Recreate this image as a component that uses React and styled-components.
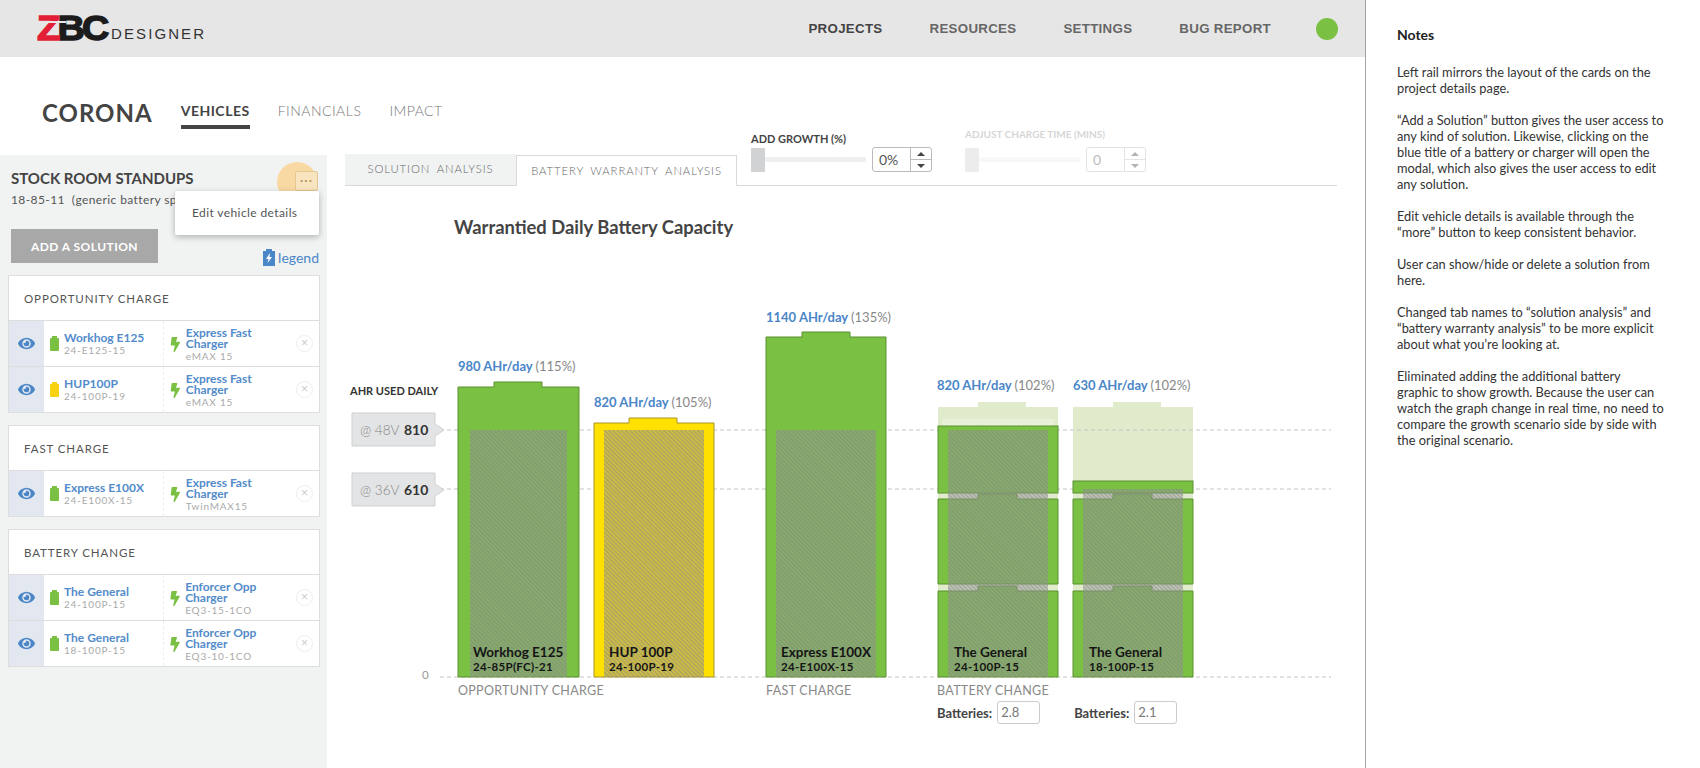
import React from "react";
import styled, { createGlobalStyle } from "styled-components";
import { FaEye, FaBolt } from "react-icons/fa";

const GlobalStyle = createGlobalStyle`
  html, body { margin: 0; padding: 0; background: #fff; }
  body { font-family: Lato, "Open Sans", sans-serif; color: #444; }
`;

const Page = styled.div`
  display: flex;
  width: 1700px;
  height: 768px;
  overflow: hidden;
`;

const Main = styled.div`
  width: 1365px;
  border-right: 1px solid #a5a5a5;
  display: flex;
  flex-direction: column;
`;

const Header = styled.header`
  height: 57px;
  flex: none;
  background: #e6e6e6;
  display: flex;
  align-items: center;
  padding: 0 27px 0 37px;
`;

const Logo = styled.div`
  display: flex;
  align-items: flex-end;
  margin-right: auto;
  margin-top: -2px;
`;

const LogoMark = styled.span`
  font-family: "Liberation Sans", Arial, sans-serif;
  font-weight: 700;
  font-size: 35px;
  line-height: 27px;
  letter-spacing: -2.5px;
  color: #1c1c1c;
  -webkit-text-stroke: 1.4px currentColor;
  display: inline-block;
  width: 70px;
  white-space: nowrap;
  transform: scaleX(1.08);
  transform-origin: left;
`;

const LogoZ = styled.span`
  position: relative;
  color: #e21f36;
  &::after {
    content: "";
    position: absolute;
    left: 5px;
    top: 13px;
    width: 22px;
    height: 2px;
    background: #e6e6e6;
  }
`;

const LogoWord = styled.span`
  font-family: "Liberation Sans", Arial, sans-serif;
  font-size: 15px;
  line-height: 14px;
  letter-spacing: 2.1px;
  color: #333;
  margin-left: 4px;
`;

const TopNav = styled.nav`
  display: flex;
  align-items: center;
  gap: 47px;
`;

const TopLink = styled.a`
  font-family: "Liberation Sans", Arial, sans-serif;
  font-weight: 700;
  font-size: 13.3px;
  letter-spacing: 0.3px;
  color: ${(p) => (p.$active ? "#444" : "#666")};
`;

const StatusDot = styled.span`
  width: 22px;
  height: 22px;
  border-radius: 50%;
  background: #7ac143;
  margin-left: -2px;
`;

const ProjectBar = styled.div`
  height: 98px;
  flex: none;
  display: flex;
  align-items: flex-start;
  padding: 40px 0 0 42px;
  box-sizing: border-box;
`;

const ProjectName = styled.h1`
  margin: 0 28px 0 0;
  font-size: 24px;
  line-height: 32px;
  font-weight: 700;
  letter-spacing: 1px;
  color: #444;
`;

const ProjectTabs = styled.div`
  display: flex;
  gap: 28px;
  padding-top: 3px;
`;

const ProjectTab = styled.a`
  font-size: 14px;
  line-height: 22px;
  letter-spacing: 0.5px;
  height: 29px;
  box-sizing: border-box;
  font-weight: ${(p) => (p.$active ? 700 : 300)};
  color: ${(p) => (p.$active ? "#444" : "#777")};
  border-bottom: ${(p) => (p.$active ? "4px solid #444" : "none")};
`;

const Body = styled.div`
  flex: 1;
  display: flex;
  min-height: 0;
`;

const Rail = styled.aside`
  width: 327px;
  flex: none;
  background: #f1f3f3;
  box-sizing: border-box;
  padding: 15px 7px 0 8px;
`;

const VehicleHead = styled.div`
  position: relative;
  padding-left: 3px;
`;

const VehicleTitle = styled.h2`
  margin: 0;
  font-size: 15px;
  line-height: 17px;
  font-weight: 700;
  color: #444;
`;

const VehicleSub = styled.div`
  margin-top: 5px;
  font-size: 12px;
  line-height: 16px;
  letter-spacing: 0.4px;
  color: #555;
  white-space: pre;
`;

const Highlight = styled.span`
  position: absolute;
  left: 269px;
  top: -8px;
  width: 40px;
  height: 40px;
  border-radius: 50%;
  background: #f8d9a3;
`;

const MoreButton = styled.button`
  position: absolute;
  left: 287px;
  top: 1px;
  width: 23px;
  height: 20px;
  padding: 0 0 6px;
  border: 1px solid #e3c790;
  border-radius: 2px;
  background: #f8e4bf;
  color: #b8935a;
  font-size: 12px;
  font-weight: 700;
  line-height: 12px;
  letter-spacing: 1px;
`;

const Popover = styled.div`
  position: absolute;
  left: 167px;
  top: 21px;
  width: 144px;
  height: 44px;
  background: #fff;
  border-radius: 2px;
  box-shadow: 0 2px 6px rgba(0, 0, 0, 0.28);
  font-size: 12px;
  line-height: 44px;
  letter-spacing: 0.4px;
  color: #555;
  padding-left: 17px;
  box-sizing: border-box;
  white-space: nowrap;
`;

const ActionRow = styled.div`
  display: flex;
  align-items: flex-end;
  justify-content: space-between;
  margin: 21px 1px 12px 3px;
`;

const AddButton = styled.button`
  width: 147px;
  height: 34px;
  border: 0;
  background: #a8a8a8;
  color: #fff;
  font-family: inherit;
  font-weight: 700;
  font-size: 12px;
  letter-spacing: 0.45px;
`;

const Legend = styled.a`
  display: flex;
  align-items: center;
  gap: 3px;
  font-size: 14px;
  line-height: 14px;
  color: #4a86c8;
  margin-bottom: -3px;
`;

const Card = styled.section`
  background: #fff;
  border: 1px solid #ddd;
  margin-bottom: 12px;
`;

const CardHeader = styled.div`
  height: 44px;
  display: flex;
  align-items: center;
  padding-left: 15px;
  font-size: 11.5px;
  letter-spacing: 0.9px;
  color: #555;
`;

const SolutionRow = styled.div`
  height: 45px;
  display: flex;
  border-top: 1px solid #ddd;
`;

const EyeCell = styled.div`
  width: 35px;
  flex: none;
  background: #e3e8f0;
  display: flex;
  align-items: center;
  justify-content: center;
  color: #4a86c8;
  font-size: 17px;
`;

const BatteryCell = styled.div`
  width: 120px;
  flex: none;
  box-sizing: border-box;
  display: flex;
  align-items: center;
  gap: 5px;
  padding-left: 6px;
  border-right: 1px dashed #eee;
`;

const ChargerCell = styled.div`
  width: 131px;
  flex: none;
  box-sizing: border-box;
  display: flex;
  align-items: center;
  gap: 3px;
  padding: 1px 0 0 4px;
  color: #7ac143;
  font-size: 15px;
`;

const BatteryIcon = styled.span`
  position: relative;
  width: 9px;
  height: 13px;
  margin-top: 2px;
  background: ${(p) => p.$color};
  border-radius: 1px;
  flex: none;
  &::before {
    content: "";
    position: absolute;
    left: 2px;
    top: -2px;
    width: 5px;
    height: 2px;
    background: ${(p) => p.$color};
  }
`;

const ItemText = styled.div`
  min-width: 0;
`;

const ItemName = styled.div`
  font-size: 12px;
  line-height: 11px;
  font-weight: 700;
  color: #4a86c8;
  opacity: 0.95;
`;

const ItemPart = styled.div`
  font-size: 10px;
  line-height: 12px;
  margin-top: 1px;
  letter-spacing: 0.8px;
  color: #aaa;
`;

const RemoveIcon = styled.span`
  width: 15px;
  height: 15px;
  margin: auto 0 auto 1px;
  border: 1px solid #eee;
  border-radius: 50%;
  color: #ccc;
  font-size: 12px;
  line-height: 14px;
  text-align: center;
  flex: none;
  font-family: "Liberation Sans", sans-serif;
`;

const Content = styled.main`
  flex: 1;
  min-width: 0;
  display: flex;
  flex-direction: column;
`;

const TabBar = styled.div`
  height: 32px;
  box-sizing: border-box;
  margin: -1px 28px 0 18px;
  flex: none;
  display: flex;
  align-items: flex-end;
  border-bottom: 1px solid #d9d9d9;
`;

const Tab = styled.a`
  height: ${(p) => (p.$active ? "31px" : "32px")};
  box-sizing: border-box;
  margin-bottom: -1px;
  padding-bottom: ${(p) => (p.$active ? "0" : "3px")};
  display: flex;
  align-items: center;
  justify-content: center;
  flex: none;
  font-size: 11.3px;
  font-weight: 300;
  letter-spacing: 0.9px;
  word-spacing: 3px;
  color: #666;
  width: ${(p) => p.$w}px;
  background: ${(p) => (p.$active ? "#fff" : "#f1f3f3")};
  border: ${(p) => (p.$active ? "1px solid #d9d9d9" : "none")};
  border-bottom: ${(p) => (p.$active ? "1px solid #fff" : "1px solid #d9d9d9")};
`;

const Controls = styled.div`
  display: flex;
  margin-left: 14px;
  margin-bottom: 13px;
  gap: 33px;
`;

const Control = styled.div`
  opacity: ${(p) => (p.$disabled ? 0.4 : 1)};
`;

const ControlLabel = styled.div`
  font-size: ${(p) => (p.$disabled ? "10px" : "11px")};
  line-height: 13px;
  font-weight: 700;
  color: ${(p) => (p.$disabled ? "#999" : "#444")};
  margin-bottom: ${(p) => (p.$disabled ? "6px" : "2px")};
  margin-top: ${(p) => (p.$disabled ? "-4px" : "0")};
  white-space: nowrap;
`;

const ControlRow = styled.div`
  display: flex;
  align-items: center;
  gap: 6px;
`;

const Slider = styled.div`
  position: relative;
  width: 115px;
  height: 24px;
  display: flex;
  align-items: center;
  &::before {
    content: "";
    width: 100%;
    height: 5px;
    background: #eef0f0;
  }
`;

const SliderThumb = styled.span`
  position: absolute;
  left: 0;
  top: 0;
  width: 14px;
  height: 24px;
  background: #d0d2d3;
  border-radius: 1px;
`;

const Spinner = styled.div`
  width: ${(p) => p.$w}px;
  height: 25px;
  box-sizing: border-box;
  display: flex;
  border: 1px solid #bbb;
  border-radius: 3px;
  font-size: 14px;
  line-height: 23px;
  color: #555;
`;

const SpinnerValue = styled.span`
  flex: 1;
  padding-left: 6px;
`;

const SpinnerArrows = styled.span`
  width: 20px;
  border-left: 1px solid #bbb;
  display: flex;
  flex-direction: column;
`;

const SpinnerArrow = styled.span`
  flex: 1;
  display: flex;
  align-items: center;
  justify-content: center;
  & + & {
    border-top: 1px solid #bbb;
  }
  &::after {
    content: "";
    border-left: 4px solid transparent;
    border-right: 4px solid transparent;
    ${(p) => (p.$down ? "border-top: 4px solid #444;" : "border-bottom: 4px solid #444;")}
  }
`;

const ChartTitle = styled.h3`
  margin: 0;
  padding: 30px 0 0 127px;
  font-size: 18.4px;
  line-height: 22px;
  height: 60px;
  box-sizing: border-box;
  font-weight: 700;
  color: #444;
  flex: none;
`;

const ChartSvg = styled.svg`
  display: block;
  flex: none;
`;

const ValueLabel = styled.text`
  font-size: 13px;
  font-weight: 700;
  fill: #4a86c8;
`;

const ValuePct = styled.tspan`
  font-weight: 400;
  fill: #888;
`;

const BarName = styled.text`
  font-size: 13.5px;
  font-weight: 700;
  fill: #151515;
`;

const BarPart = styled.text`
  font-size: 11.5px;
  font-weight: 700;
  letter-spacing: 0.3px;
  fill: #151515;
`;

const CategoryLabel = styled.text`
  font-size: 12.5px;
  letter-spacing: 0.3px;
  font-weight: 400;
  fill: #888;
`;

const AxisLabel = styled.text`
  font-size: 11px;
  font-weight: 700;
  fill: #333;
`;

const TagVolt = styled.text`
  font-size: 13.5px;
  font-weight: 300;
  fill: #888;
`;

const TagValue = styled.text`
  font-size: 14px;
  font-weight: 700;
  fill: #333;
`;

const ZeroLabel = styled.text`
  font-size: 11.5px;
  fill: #999;
`;

const BatteriesRow = styled.div`
  display: flex;
  margin-left: 610px;
  gap: 34px;
  margin-top: 2px;
`;

const BatteriesField = styled.label`
  display: flex;
  align-items: center;
  gap: 5px;
  font-size: 13px;
  font-weight: 700;
  color: #444;
`;

const BatteriesInput = styled.span`
  width: 43px;
  height: 23px;
  box-sizing: border-box;
  border: 1px solid #ccc;
  border-radius: 3px;
  font-size: 13px;
  font-weight: 400;
  line-height: 21px;
  padding-left: 3px;
  color: #777;
`;

const Notes = styled.aside`
  flex: 1;
  padding: 27px 36px 0 31px;
  font-size: 12.8px;
  line-height: 16px;
  color: #333;
`;

const NotesTitle = styled.h4`
  margin: 0 0 21px;
  font-size: 14px;
  line-height: 16px;
  font-weight: 700;
  color: #222;
`;

const NotesPara = styled.p`
  margin: 0 0 16px;
`;

const GREEN = "#7ac143";
const YELLOW = "#ffe000";
const GREEN_LINE = "#5a9130";

const groups = [
  {
    title: "OPPORTUNITY CHARGE",
    rows: [
      { name: "Workhog E125", part: "24-E125-15", color: GREEN, charger: "Express Fast Charger", model: "eMAX 15" },
      { name: "HUP100P", part: "24-100P-19", color: "#f8d210", charger: "Express Fast Charger", model: "eMAX 15" },
    ],
  },
  {
    title: "FAST CHARGE",
    rows: [
      { name: "Express E100X", part: "24-E100X-15", color: GREEN, charger: "Express Fast Charger", model: "TwinMAX15" },
    ],
  },
  {
    title: "BATTERY CHANGE",
    rows: [
      { name: "The General", part: "24-100P-15", color: GREEN, charger: "Enforcer Opp Charger", model: "EQ3-15-1CO" },
      { name: "The General", part: "18-100P-15", color: GREEN, charger: "Enforcer Opp Charger", model: "EQ3-10-1CO" },
    ],
  },
];

const notes = [
  "Left rail mirrors the layout of the cards on the project details page.",
  "“Add a Solution” button gives the user access to any kind of solution. Likewise, clicking on the blue title of a battery or charger will open the modal, which also gives the user access to edit any solution.",
  "Edit vehicle details is available through the “more” button to keep consistent behavior.",
  "User can show/hide or delete a solution from here.",
  "Changed tab names to “solution analysis” and “battery warranty analysis” to be more explicit about what you’re looking at.",
  "Eliminated adding the additional battery graphic to show growth. Because the user can watch the graph change in real time, no need to compare the growth scenario side by side with the original scenario.",
];

const ZERO = 676;

const bars = [
  { x: 458, w: 121, top: 386, nubX: 36, inset: 12, hatchTop: 429, fill: GREEN, line: GREEN_LINE, value: "980 AHr/day", pct: "(115%)", labelY: 370, name: "Workhog E125", part: "24-85P(FC)-21" },
  { x: 594, w: 120, top: 422, nubX: 35, inset: 10, hatchTop: 429, fill: YELLOW, line: "#a8952a", value: "820 AHr/day", pct: "(105%)", labelY: 406, name: "HUP 100P", part: "24-100P-19" },
  { x: 766, w: 120, top: 336, nubX: 36, inset: 10, hatchTop: 429, fill: GREEN, line: GREEN_LINE, value: "1140 AHr/day", pct: "(135%)", labelY: 321, name: "Express E100X", part: "24-E100X-15" },
];

const stacks = [
  { x: 938, firstTop: 425, hatchTop: 429, value: "820 AHr/day", pct: "(102%)", labelX: 937, name: "The General", part: "24-100P-15" },
  { x: 1073, firstTop: 480, hatchTop: 488, value: "630 AHr/day", pct: "(102%)", labelX: 1073, name: "The General", part: "18-100P-15" },
];

function batteryPath(x, w, top, nubX) {
  const nub = top - 5;
  return `M${x} ${ZERO}V${top}H${x + nubX}V${nub}H${x + nubX + 48}V${top}H${x + w}V${ZERO}Z`;
}

function SolutionCard({ group }) {
  return (
    <Card>
      <CardHeader>{group.title}</CardHeader>
      {group.rows.map((row) => (
        <SolutionRow key={row.part}>
          <EyeCell>
            <FaEye />
          </EyeCell>
          <BatteryCell>
            <BatteryIcon $color={row.color} />
            <ItemText>
              <ItemName>{row.name}</ItemName>
              <ItemPart>{row.part}</ItemPart>
            </ItemText>
          </BatteryCell>
          <ChargerCell>
            <FaBolt />
            <ItemText>
              <ItemName>{row.charger}</ItemName>
              <ItemPart>{row.model}</ItemPart>
            </ItemText>
          </ChargerCell>
          <RemoveIcon>×</RemoveIcon>
        </SolutionRow>
      ))}
    </Card>
  );
}

function Chart() {
  return (
    <ChartSvg width="1038" height="453" viewBox="327 245 1038 453">
      <defs>
        <pattern id="hatch" width="3" height="3" patternUnits="userSpaceOnUse" patternTransform="rotate(-45)">
          <rect width="3" height="3" fill="rgba(152,152,152,0.42)" />
          <rect width="1.5" height="3" fill="rgba(128,128,132,0.5)" />
        </pattern>
      </defs>

      {stacks.map((s) => (
        <path key={s.part} d={batteryPath(s.x, 120, 406, 40)} fill="#e0ebcb" />
      ))}
      <rect x="942" y="418" width="112" height="7" fill="#e8f0da" />

      {[429, 488, ZERO].map((y) => (
        <line key={y} x1="440" x2="1331" y1={y} y2={y} stroke="#c4c4c4" strokeDasharray="4 3" />
      ))}

      {bars.map((b) => (
        <g key={b.part}>
          <ValueLabel x={b.x} y={b.labelY}>
            {b.value} <ValuePct>{b.pct}</ValuePct>
          </ValueLabel>
          <path d={batteryPath(b.x, b.w, b.top, b.nubX)} fill={b.fill} stroke={b.line} />
          <rect x={b.x + b.inset} y={b.hatchTop} width={b.w - b.inset * 2} height={ZERO - b.hatchTop} fill="url(#hatch)" />
          <BarName x={b.x + 15} y="656">{b.name}</BarName>
          <BarPart x={b.x + 15} y="670">{b.part}</BarPart>
        </g>
      ))}

      {stacks.map((s) => (
        <g key={s.part}>
          <ValueLabel x={s.labelX} y="389">
            {s.value} <ValuePct>{s.pct}</ValuePct>
          </ValueLabel>
          <rect x={s.x} y={s.firstTop} width="120" height={492 - s.firstTop} fill={GREEN} stroke={GREEN_LINE} />
          <path d={`M${s.x} 583V498H${s.x + 40}V493H${s.x + 79}V498H${s.x + 120}V583Z`} fill={GREEN} stroke={GREEN_LINE} />
          <path d={`M${s.x} ${ZERO}V590H${s.x + 40}V585H${s.x + 79}V590H${s.x + 120}V${ZERO}Z`} fill={GREEN} stroke={GREEN_LINE} />
          <rect x={s.x + 10} y={s.hatchTop} width="100" height={ZERO - s.hatchTop} fill="url(#hatch)" />
          <BarName x={s.x + 16} y="656">{s.name}</BarName>
          <BarPart x={s.x + 16} y="670">{s.part}</BarPart>
        </g>
      ))}

      <AxisLabel x="350" y="394">AHR USED DAILY</AxisLabel>
      {[
        { y: 412, volt: "@ 48V", value: "810" },
        { y: 472, volt: "@ 36V", value: "610" },
      ].map((t) => (
        <g key={t.value}>
          <path
            d={`M352 ${t.y}H435V${t.y + 11}L444 ${t.y + 17}L435 ${t.y + 23}V${t.y + 33}H352Z`}
            fill="#e3e4e5"
            stroke="#d0d0d0"
          />
          <TagVolt x="360" y={t.y + 22}>{t.volt}</TagVolt>
          <TagValue x="404" y={t.y + 22}>{t.value}</TagValue>
        </g>
      ))}
      <ZeroLabel x="422" y="678">0</ZeroLabel>

      <CategoryLabel x="458" y="694">OPPORTUNITY CHARGE</CategoryLabel>
      <CategoryLabel x="766" y="694">FAST CHARGE</CategoryLabel>
      <CategoryLabel x="937" y="694">BATTERY CHANGE</CategoryLabel>
    </ChartSvg>
  );
}

export default function App() {
  return (
    <Page>
      <GlobalStyle />
      <Main>
        <Header>
          <Logo>
            <LogoMark>
              <LogoZ>Z</LogoZ>BC
            </LogoMark>
            <LogoWord>DESIGNER</LogoWord>
          </Logo>
          <TopNav>
            <TopLink $active>PROJECTS</TopLink>
            <TopLink>RESOURCES</TopLink>
            <TopLink>SETTINGS</TopLink>
            <TopLink>BUG REPORT</TopLink>
            <StatusDot />
          </TopNav>
        </Header>

        <ProjectBar>
          <ProjectName>CORONA</ProjectName>
          <ProjectTabs>
            <ProjectTab $active>VEHICLES</ProjectTab>
            <ProjectTab>FINANCIALS</ProjectTab>
            <ProjectTab>IMPACT</ProjectTab>
          </ProjectTabs>
        </ProjectBar>

        <Body>
          <Rail>
            <VehicleHead>
              <VehicleTitle>STOCK ROOM STANDUPS</VehicleTitle>
              <VehicleSub>18-85-11  (generic battery specs)</VehicleSub>
              <Highlight />
              <MoreButton>...</MoreButton>
              <Popover>Edit vehicle details</Popover>
            </VehicleHead>
            <ActionRow>
              <AddButton>ADD A SOLUTION</AddButton>
              <Legend>
                <svg width="12" height="17" viewBox="0 0 12 17">
                  <path d="M0 2h3V0h6v2h3v15H0z" fill="#4a86c8" />
                  <path d="M7 4L3 10h2.5L4.5 14 9 8H6.5z" fill="#fff" />
                </svg>
                legend
              </Legend>
            </ActionRow>
            {groups.map((g) => (
              <SolutionCard key={g.title} group={g} />
            ))}
          </Rail>

          <Content>
            <TabBar>
              <Tab $w={171}>SOLUTION ANALYSIS</Tab>
              <Tab $active $w={221}>BATTERY WARRANTY ANALYSIS</Tab>
              <Controls>
                <Control>
                  <ControlLabel>ADD GROWTH (%)</ControlLabel>
                  <ControlRow>
                    <Slider>
                      <SliderThumb />
                    </Slider>
                    <Spinner $w={60}>
                      <SpinnerValue>0%</SpinnerValue>
                      <SpinnerArrows>
                        <SpinnerArrow />
                        <SpinnerArrow $down />
                      </SpinnerArrows>
                    </Spinner>
                  </ControlRow>
                </Control>
                <Control $disabled>
                  <ControlLabel $disabled>ADJUST CHARGE TIME (MINS)</ControlLabel>
                  <ControlRow>
                    <Slider>
                      <SliderThumb />
                    </Slider>
                    <Spinner $w={60}>
                      <SpinnerValue>0</SpinnerValue>
                      <SpinnerArrows>
                        <SpinnerArrow />
                        <SpinnerArrow $down />
                      </SpinnerArrows>
                    </Spinner>
                  </ControlRow>
                </Control>
              </Controls>
            </TabBar>
            <ChartTitle>Warrantied Daily Battery Capacity</ChartTitle>
            <Chart />
            <BatteriesRow>
              <BatteriesField>
                Batteries:
                <BatteriesInput>2.8</BatteriesInput>
              </BatteriesField>
              <BatteriesField>
                Batteries:
                <BatteriesInput>2.1</BatteriesInput>
              </BatteriesField>
            </BatteriesRow>
          </Content>
        </Body>
      </Main>

      <Notes>
        <NotesTitle>Notes</NotesTitle>
        {notes.map((n) => (
          <NotesPara key={n}>{n}</NotesPara>
        ))}
      </Notes>
    </Page>
  );
}
